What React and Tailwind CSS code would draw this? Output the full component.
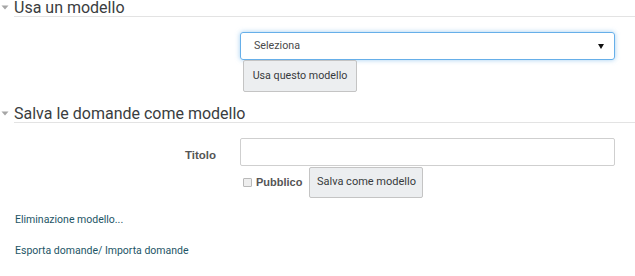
import React from 'react';

const Caret = () => (
  <svg width="8" height="5" viewBox="0 0 8 5" className="block">
    <path d="M0.5 0.5 L7.5 0.5 L4 4.5 Z" fill="#a6a6a6" />
  </svg>
);

const SectionHeader = ({ title }) => (
  <div className="flex">
    <div className="w-[14px] shrink-0 pl-[1px] pt-[5px]">
      <Caret />
    </div>
    <div className="flex-1 border-b border-[#e3e3e3] text-[16px] leading-[16px] text-[#3a3d40]">
      {title}
    </div>
  </div>
);

const Btn = ({ children, className = '' }) => (
  <button
    type="button"
    className={`w-[114px] rounded-[2px] border border-[#c4c4c4] bg-[#eceef0] text-center text-[10.7px] text-[#373a3c] ${className}`}
  >
    {children}
  </button>
);

export default function App() {
  return (
    <div className="w-[635px] h-[276px] overflow-hidden bg-white font-['Roboto',sans-serif]">
      {/* Usa un modello */}
      <SectionHeader title="Usa un modello" />
      <div className="mt-[15px] ml-[240px]">
        <div className="flex h-[28px] w-[375px] items-center justify-between rounded-[3px] border border-[#66afe9] pl-[13px] pr-[10px] text-[10.7px] text-[#4a4a4a] shadow-[0_0_5px_rgba(102,175,233,0.6)]">
          <span>Seleziona</span>
          <svg width="6" height="5" viewBox="0 0 6 5">
            <path d="M0 0 L6 0 L3 5 Z" fill="#111" />
          </svg>
        </div>
        <Btn className="ml-[3px] h-[32px] block">Usa questo modello</Btn>
      </div>

      {/* Salva le domande come modello */}
      <div className="mt-[14px]">
        <SectionHeader title="Salva le domande come modello" />
      </div>
      <div className="mt-[15px] flex items-start">
        <div className="w-[216px] pt-[9px] text-right font-['Liberation_Sans',sans-serif] text-[11.5px] font-bold text-[#555]">
          Titolo
        </div>
        <div className="ml-[24px] h-[28px] w-[375px] rounded-[2px] border border-[#cfcfcf] bg-white" />
      </div>
      <div className="mt-[1px] ml-[243px] flex items-center">
        <span className="h-[9px] w-[9px] rounded-[1px] border border-[#b9b9b9] bg-[#eeeeee]" />
        <span className="ml-[4px] font-['Liberation_Sans',sans-serif] text-[11px] font-bold text-[#555]">
          Pubblico
        </span>
        <Btn className="ml-[7px] h-[31px] text-[11px]">Salva come modello</Btn>
      </div>

      {/* Links */}
      <a className="mt-[15px] ml-[15px] block w-fit text-[10.5px] leading-[13px] text-[#1d5566]" href="#">
        Eliminazione modello...
      </a>
      <a className="mt-[18px] ml-[15px] block w-fit text-[10.5px] leading-[13px] text-[#1d5566]" href="#">
        Esporta domande/ Importa domande
      </a>
    </div>
  );
}
